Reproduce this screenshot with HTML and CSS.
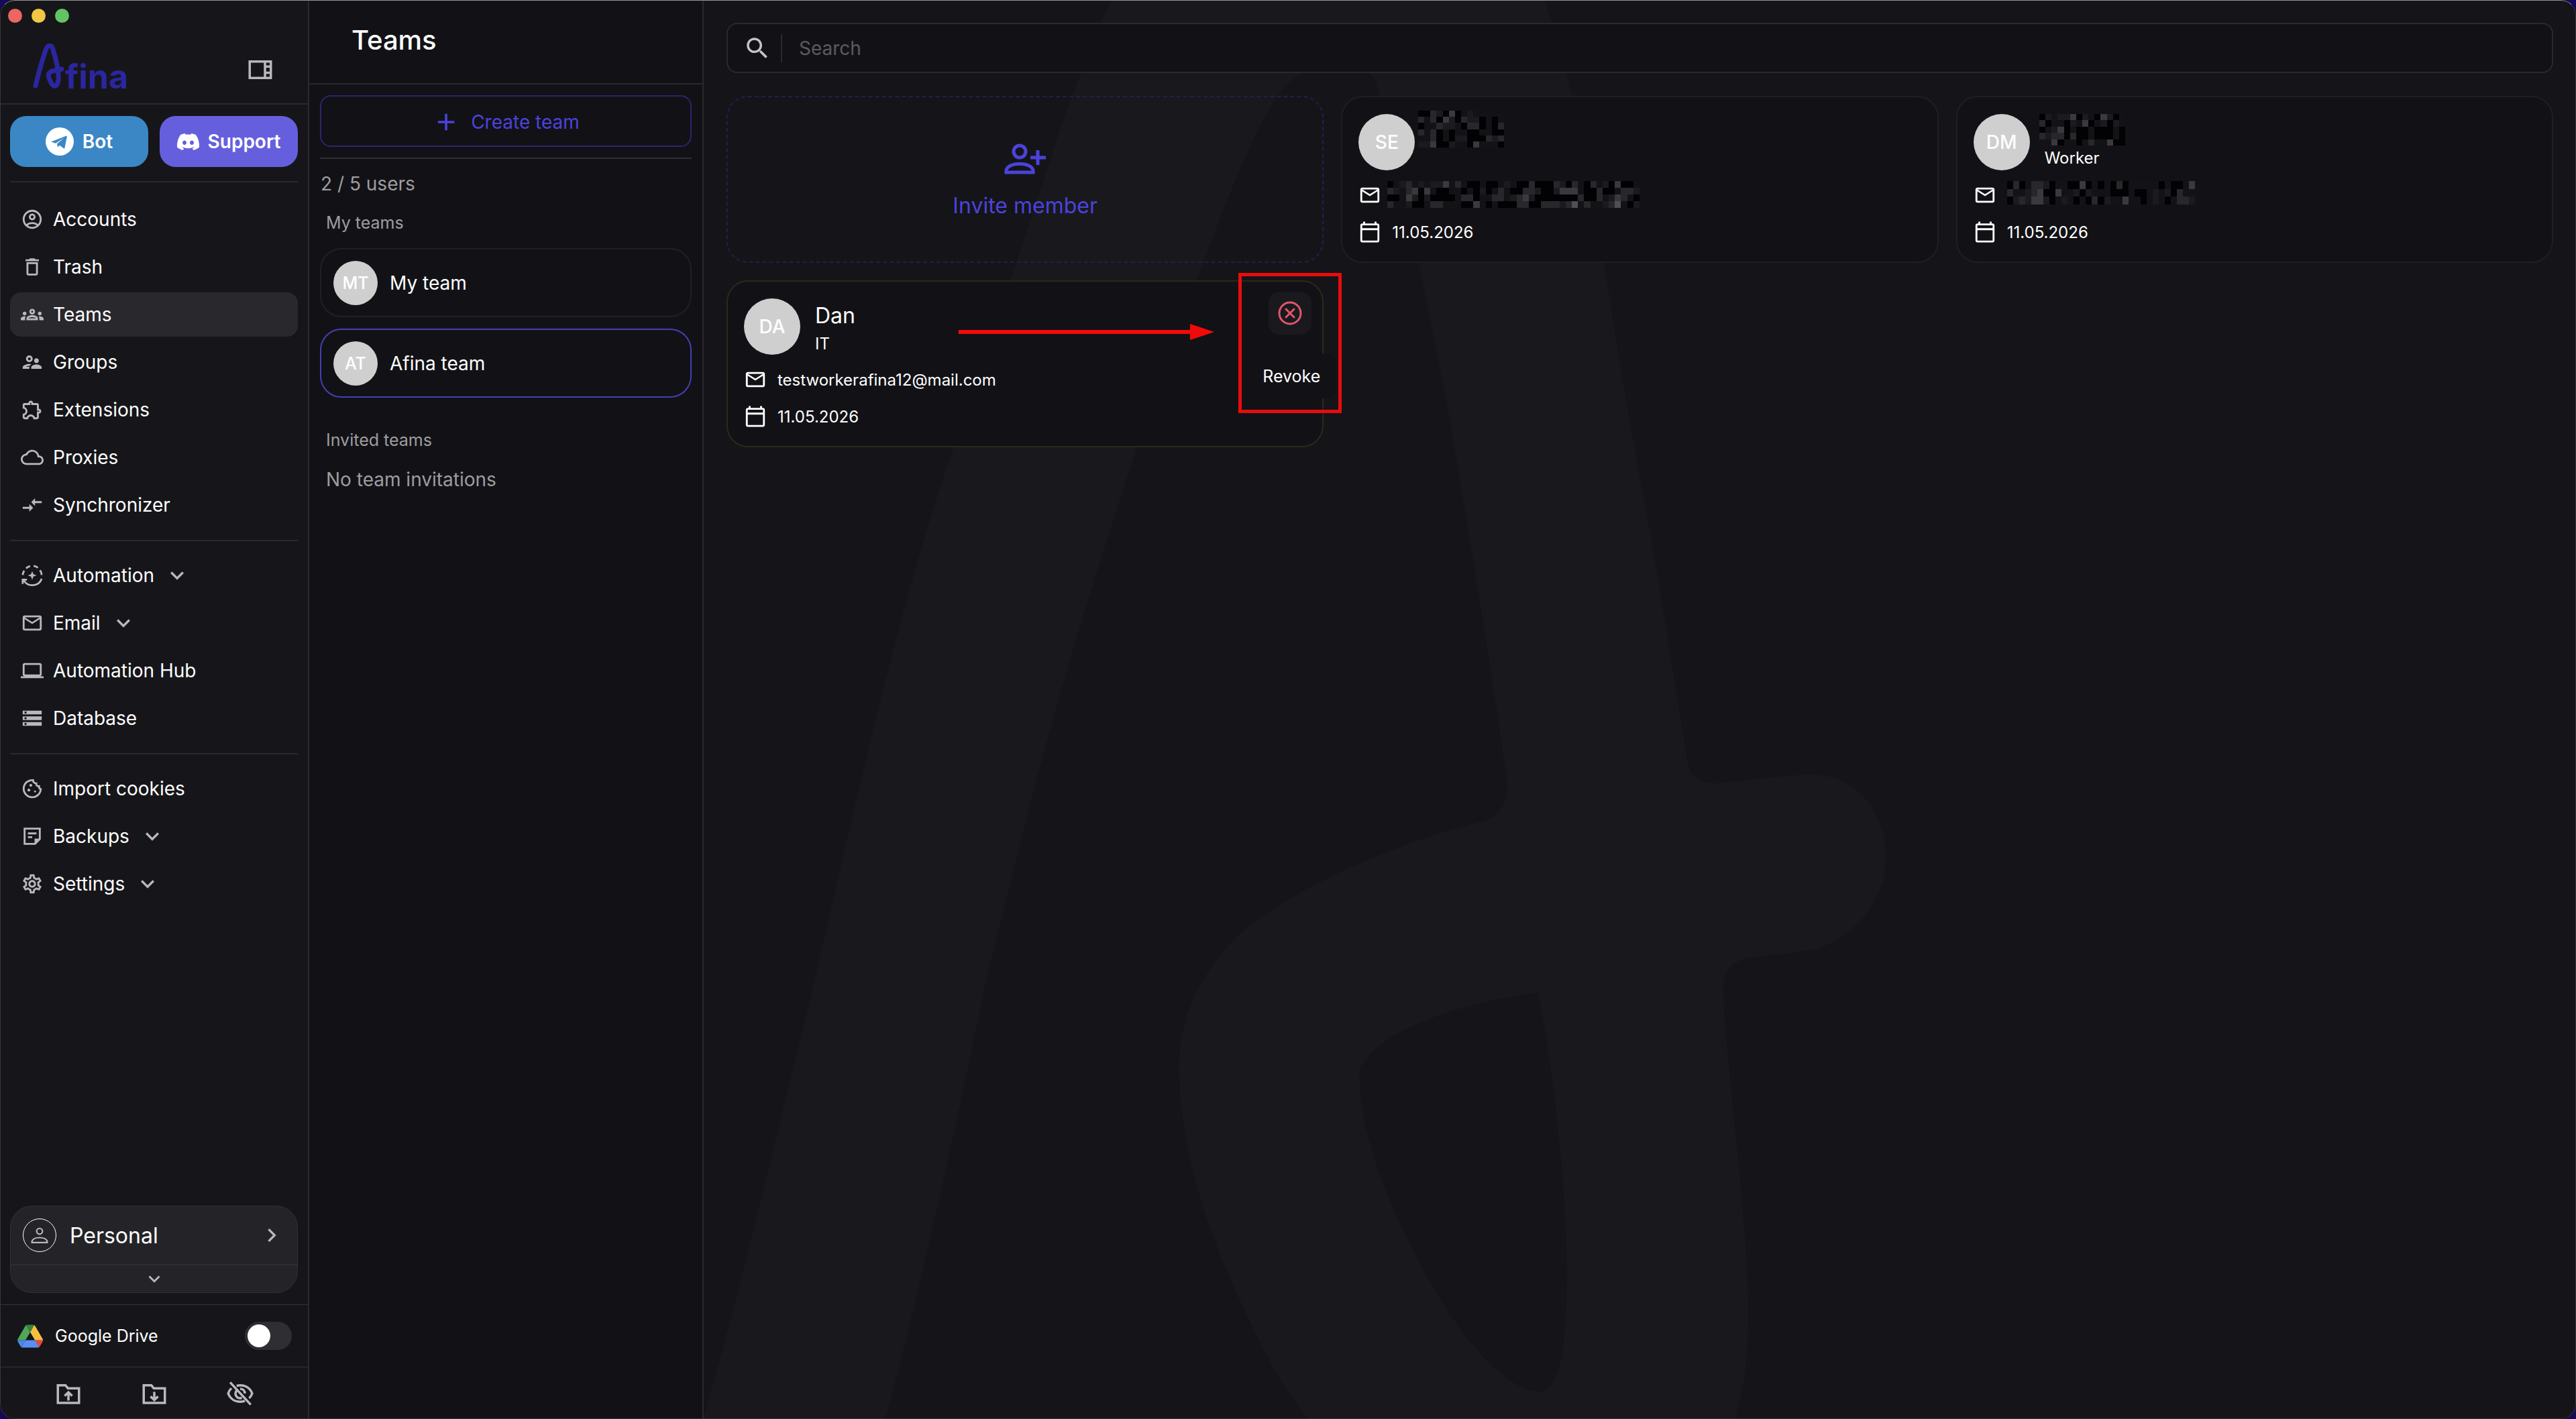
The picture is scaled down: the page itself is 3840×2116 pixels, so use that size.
FILE: index.html
```html
<!DOCTYPE html>
<html lang="en">
<head>
    <meta charset="utf-8">
    <title>Afina - Teams</title>
    <meta name="viewport" content="width=device-width, initial-scale=1.0">
    <link rel="stylesheet" href="styles.css">
</head>
<body>
<div class="window">

    <!-- sidebar -->
    <aside class="sidebar">
        <header class="sidebar-header">
            <div class="lights">
                <span class="light red"></span>
                <span class="light yellow"></span>
                <span class="light green"></span>
            </div>
            <div class="brand-row">
                <a href="#" class="brand">
                    <svg class="brand-mark" viewBox="49 70 46 67"><path d="M53 133C58 112 63 94 68 80C71 71 77 71 79 79C84 95 88 112 87 124C86 135 80 136 76 128C69 115 72 111 84 110L92 108"/></svg>
                    <span>fina</span>
                </a>
                <button class="icon-button" aria-label="Collapse sidebar">
                    <svg class="icon-lg" viewBox="0 0 24 24"><path d="M2 4v16h20V4H2zm2 2h11v12H4V6zm13 0h3v2.300h-3V6zm0 4.300h3v3.200h-3v-3.200zm0 5.200h3V18h-3v-2.500z" fill-rule="evenodd"/></svg>
                </button>
            </div>
        </header>

        <div class="social">
            <button class="social-button bot">
                <svg class="telegram" viewBox="0 0 42 42"><circle cx="21" cy="21" r="21"/><path class="plane" d="M8 21.500L31 12.500C31.500 12.300 32 12.600 31.900 13.300L28.500 30.500C28.300 31.600 27.700 31.700 27 31.200L21 26.800L18 29.500L17 24.500L27.500 15.500L15 23.800L8 21.500z"/></svg>
                Bot
            </button>
            <button class="social-button support">
                <svg class="discord" viewBox="0 0 24 24"><path d="M20.317 4.370a19.791 19.791 0 00-4.885-1.515c-.3.400-.5.900-.687 1.286-1.845-.276-3.680-.276-5.487 0-.2-.450-.4-.9-.696-1.286a19.736 19.736 0 00-4.918 1.542C.533 9.046-.319 13.580.099 18.058c2.084 1.564 4.073 2.479 6.024 3.086.53-.69.961-1.360 1.310-2.022-.694-.280-1.316-.660-1.914-1.126l.450-.3c3.928 1.793 8.180 1.793 12.061 0l.450.3c-.6.450-1.220.83-1.914 1.126.360.700.790 1.360 1.309 2.022 1.961-.607 3.950-1.522 6.034-3.086.500-5.177-.838-9.674-3.592-13.688zM8.020 15.331c-1.183 0-2.157-1.086-2.157-2.419s.956-2.419 2.157-2.419c1.211 0 2.176 1.095 2.157 2.419 0 1.333-.956 2.419-2.157 2.419zm7.975 0c-1.183 0-2.157-1.086-2.157-2.419s.955-2.419 2.157-2.419c1.211 0 2.176 1.095 2.157 2.419 0 1.333-.946 2.419-2.157 2.419z"/></svg>
                Support
            </button>
        </div>

        <nav class="nav">
            <ul class="nav-group">
                <li><a href="#" class="nav-item"><svg class="icon" viewBox="0 0 24 24"><path d="M12 2C6.480 2 2 6.480 2 12s4.480 10 10 10 10-4.480 10-10S17.520 2 12 2zM7.350 18.500C8.660 17.560 10.260 17 12 17s3.340.56 4.650 1.500C15.340 19.440 13.740 20 12 20s-3.340-.56-4.650-1.500zm10.790-1.380C16.450 15.800 14.320 15 12 15s-4.450.8-6.140 2.120C4.700 15.730 4 13.950 4 12c0-4.420 3.580-8 8-8s8 3.580 8 8c0 1.950-.7 3.730-1.860 5.120z"/><path d="M12 6c-1.930 0-3.500 1.570-3.500 3.500S10.070 13 12 13s3.500-1.570 3.500-3.500S13.930 6 12 6zm0 5c-.83 0-1.500-.67-1.500-1.500S11.170 8 12 8s1.500.67 1.500 1.500S12.830 11 12 11z"/></svg>Accounts</a></li>
                <li><a href="#" class="nav-item"><svg class="icon" viewBox="0 0 24 24"><path d="M6 19c0 1.100.9 2 2 2h8c1.100 0 2-.9 2-2V7H6v12zM8 9h8v10H8V9zm7.500-5l-1-1h-5l-1 1H5v2h14V4z"/></svg>Trash</a></li>
                <li><a href="#" class="nav-item active"><svg class="icon" viewBox="0 0 24 24"><path d="M4 13c1.100 0 2-.9 2-2s-.9-2-2-2-2 .9-2 2 .9 2 2 2zm1.130 1.100c-.37-.06-.74-.1-1.130-.1-.99 0-1.930.21-2.780.58C.48 14.900 0 15.620 0 16.430V18h4.500v-1.610c0-.83.23-1.610.63-2.290zM20 13c1.100 0 2-.9 2-2s-.9-2-2-2-2 .9-2 2 .9 2 2 2zm4 3.430c0-.81-.48-1.530-1.220-1.850-.85-.37-1.790-.58-2.780-.58-.39 0-.76.04-1.130.1.400.68.63 1.460.63 2.290V18H24v-1.570zM16.240 13.650c-1.170-.52-2.610-.9-4.240-.9-1.630 0-3.070.39-4.240.9C6.680 14.130 6 15.210 6 16.390V18h12v-1.610c0-1.180-.68-2.260-1.760-2.740zM8.070 16c.09-.23.13-.39.91-.69.97-.38 1.990-.56 3.020-.56s2.050.18 3.020.56c.77.3.81.46.91.69H8.070zM12 8c.55 0 1 .45 1 1s-.45 1-1 1-1-.45-1-1 .45-1 1-1m0-2c-1.660 0-3 1.340-3 3s1.340 3 3 3 3-1.340 3-3-1.340-3-3-3z"/></svg>Teams</a></li>
                <li><a href="#" class="nav-item"><svg class="icon" viewBox="0 0 24 24"><path d="M9 12c1.930 0 3.500-1.570 3.500-3.500S10.930 5 9 5 5.500 6.570 5.500 8.500 7.070 12 9 12zm0-5c.83 0 1.500.67 1.500 1.500S9.830 10 9 10s-1.500-.67-1.500-1.500S8.170 7 9 7zm.05 10H4.770c.99-.5 2.700-1 4.230-1 .11 0 .23.01.34.01.34-.73.93-1.330 1.640-1.810-.73-.13-1.420-.2-1.980-.2-2.340 0-7 1.170-7 3.500V19h7v-1.500c0-.17.02-.34.05-.5zm7.450-2.500c-1.840 0-5.500 1.010-5.500 3V19h11v-1.500c0-1.990-3.660-3-5.500-3zm1.210-1.820c.76-.43 1.290-1.240 1.290-2.180C19 9.120 17.880 8 16.500 8S14 9.120 14 10.500c0 .94.53 1.750 1.290 2.180.36.2.77.32 1.210.32s.85-.12 1.210-.32z"/></svg>Groups</a></li>
                <li><a href="#" class="nav-item"><svg class="icon" viewBox="0 0 24 24"><path d="M10.500 4.500c.28 0 .5.22.5.5v2h6v6h2c.28 0 .5.22.5.5s-.22.5-.5.5h-2v6h-2.120c-.68-1.750-2.390-3-4.380-3s-3.700 1.250-4.380 3H4v-2.120c1.750-.68 3-2.390 3-4.380 0-1.990-1.240-3.700-2.990-4.380L4 7h6V5c0-.28.22-.5.5-.5m0-2C9.120 2.500 8 3.620 8 5H4c-1.100 0-1.990.9-1.990 2v3.800h.29c1.490 0 2.700 1.210 2.700 2.700s-1.210 2.700-2.700 2.700H2V20c0 1.100.9 2 2 2h3.800v-.3c0-1.490 1.210-2.700 2.700-2.700s2.700 1.210 2.700 2.700v.3H17c1.100 0 2-.9 2-2v-4c1.380 0 2.500-1.120 2.500-2.500S20.380 11 19 11V7c0-1.100-.9-2-2-2h-4c0-1.380-1.120-2.500-2.500-2.500z"/></svg>Extensions</a></li>
                <li><a href="#" class="nav-item"><svg class="icon" viewBox="0 0 24 24"><path d="M19.350 10.040C18.670 6.590 15.640 4 12 4 9.110 4 6.600 5.640 5.350 8.040 2.340 8.360 0 10.910 0 14c0 3.310 2.690 6 6 6h13c2.760 0 5-2.240 5-5 0-2.640-2.050-4.780-4.650-4.960zM19 18H6c-2.210 0-4-1.790-4-4 0-2.050 1.530-3.760 3.560-3.970l1.070-.11.5-.95C8.080 7.140 9.940 6 12 6c2.620 0 4.880 1.860 5.390 4.430l.3 1.500 1.530.11c1.560.1 2.780 1.410 2.780 2.960 0 1.650-1.350 3-3 3z"/></svg>Proxies</a></li>
                <li><a href="#" class="nav-item"><svg class="icon" viewBox="0 0 24 24"><path d="M9.010 14H2v2h7.010v3L13 15l-3.990-4v3zm5.980-1v-3H22V8h-7.010V5L11 9l3.990 4z"/></svg>Synchronizer</a></li>
            </ul>
            <ul class="nav-group">
                <li><a href="#" class="nav-item"><svg class="icon line" viewBox="0 0 24 24"><path d="M2 11.500A10 10 0 0 1 3.600 7M5.500 4.600A10 10 0 0 1 9.800 2.200M13.500 2A10 10 0 0 1 18 3.900M20.200 6.500A10 10 0 0 1 22 11.500M22 15.500A10.500 10.500 0 0 1 3 17M2 21V16.500H6.500"/><path class="solid" d="M12 7.500L13.300 10.700L16.500 12L13.300 13.300L12 16.500L10.700 13.300L7.500 12L10.700 10.700z"/></svg>Automation<svg class="chevron" viewBox="0 0 24 24"><path d="M7.410 8.590L12 13.170l4.590-4.580L18 10l-6 6-6-6z"/></svg></a></li>
                <li><a href="#" class="nav-item"><svg class="icon" viewBox="0 0 24 24"><path d="M22 6c0-1.100-.9-2-2-2H4c-1.100 0-2 .9-2 2v12c0 1.100.9 2 2 2h16c1.100 0 2-.9 2-2V6zm-2 0l-8 5-8-5h16zm0 12H4V8l8 5 8-5v10z"/></svg>Email<svg class="chevron" viewBox="0 0 24 24"><path d="M7.410 8.590L12 13.170l4.590-4.580L18 10l-6 6-6-6z"/></svg></a></li>
                <li><a href="#" class="nav-item"><svg class="icon" viewBox="0 0 24 24"><path d="M20 18c1.100 0 1.990-.9 1.990-2L22 6c0-1.100-.9-2-2-2H4c-1.100 0-2 .9-2 2v10c0 1.100.9 2 2 2H0v2h24v-2h-4zM4 6h16v10H4V6z"/></svg>Automation Hub</a></li>
                <li><a href="#" class="nav-item"><svg class="icon" viewBox="0 0 24 24"><path d="M2 20h20v-4H2v4zm2-3h2v2H4v-2zM2 4v4h20V4H2zm4 3H4V5h2v2zm-4 7h20v-4H2v4zm2-3h2v2H4v-2z"/></svg>Database</a></li>
            </ul>
            <ul class="nav-group">
                <li><a href="#" class="nav-item"><svg class="icon line" viewBox="0 0 24 24"><path d="M13 3.100A9 9 0 1 0 21 12.500C19.500 12.200 19 11 19.200 9.500C17.500 9.800 16 8.500 16.300 6.500C14.300 6.500 12.800 5 13 3.100z"/><circle class="solid" cx="10.500" cy="8.500" r="1.500"/><circle class="solid" cx="8.500" cy="13.500" r="1.500"/><circle class="solid" cx="15" cy="15" r="1"/></svg>Import cookies</a></li>
                <li><a href="#" class="nav-item"><svg class="icon line" viewBox="0 0 24 24"><path d="M4 4H20V15L15 20H4zM7.500 9H16.500M7.500 13H12"/><path class="solid" d="M14.500 14.500H20L14.500 20z"/></svg>Backups<svg class="chevron" viewBox="0 0 24 24"><path d="M7.410 8.590L12 13.170l4.590-4.580L18 10l-6 6-6-6z"/></svg></a></li>
                <li><a href="#" class="nav-item"><svg class="icon" viewBox="0 0 24 24"><path d="M19.430 12.980c.04-.32.07-.64.07-.98 0-.34-.03-.66-.07-.98l2.110-1.650c.19-.15.24-.42.12-.64l-2-3.460c-.09-.16-.26-.25-.44-.25-.06 0-.12.01-.17.03l-2.490 1c-.52-.4-1.080-.73-1.690-.98l-.38-2.650C14.460 2.180 14.250 2 14 2h-4c-.25 0-.46.18-.49.42l-.38 2.650c-.61.25-1.170.59-1.690.98l-2.490-1c-.06-.02-.12-.03-.18-.03-.17 0-.34.09-.43.25l-2 3.460c-.13.22-.07.49.12.64l2.110 1.650c-.04.32-.07.65-.07.98 0 .33.03.66.07.98l-2.110 1.650c-.19.15-.24.42-.12.64l2 3.460c.09.16.26.25.44.25.06 0 .12-.01.17-.03l2.490-1c.52.4 1.080.73 1.690.98l.38 2.650c.03.24.24.42.49.42h4c.25 0 .46-.18.49-.42l.38-2.650c.61-.25 1.170-.59 1.690-.98l2.490 1c.06.02.12.03.18.03.17 0 .34-.09.43-.25l2-3.460c.12-.22.07-.49-.12-.64l-2.110-1.650zm-1.980-1.710c.04.31.05.52.05.73 0 .21-.02.43-.05.73l-.14 1.130.89.7 1.080.84-.7 1.210-1.270-.51-1.040-.42-.9.68c-.43.32-.84.56-1.250.73l-1.060.43-.16 1.130-.2 1.350h-1.400l-.19-1.350-.16-1.130-1.060-.43c-.43-.18-.83-.41-1.230-.71l-.91-.7-1.060.43-1.270.51-.7-1.210 1.080-.84.89-.7-.14-1.130c-.03-.31-.05-.54-.05-.74s.02-.43.05-.73l.14-1.130-.89-.7-1.080-.84.7-1.210 1.270.51 1.040.42.9-.68c.43-.32.84-.56 1.250-.73l1.060-.43.16-1.130.2-1.350h1.390l.19 1.350.16 1.130 1.060.43c.43.18.83.41 1.230.71l.91.7 1.060-.43 1.270-.51.7 1.210-1.070.85-.89.7.14 1.130zM12 8c-2.210 0-4 1.790-4 4s1.790 4 4 4 4-1.790 4-4-1.790-4-4-4zm0 6c-1.100 0-2-.9-2-2s.9-2 2-2 2 .9 2 2-.9 2-2 2z"/></svg>Settings<svg class="chevron" viewBox="0 0 24 24"><path d="M7.410 8.590L12 13.170l4.590-4.580L18 10l-6 6-6-6z"/></svg></a></li>
            </ul>
        </nav>

        <footer class="sidebar-footer">
            <div class="workspace">
                <button class="workspace-main">
                    <span class="workspace-avatar"><svg class="icon line" viewBox="0 0 24 24"><circle cx="12" cy="6.500" r="4"/><path d="M1.500 22V20.500C3 13.500 21 13.500 22.500 20.500V22z"/></svg></span>
                    <span class="workspace-name">Personal</span>
                    <svg class="chevron" viewBox="0 0 24 24"><path d="M8.590 16.590L13.170 12 8.590 7.410 10 6l6 6-6 6z"/></svg>
                </button>
                <button class="workspace-more" aria-label="Show more"><svg class="icon" viewBox="0 0 24 24"><path d="M7.410 8.590L12 13.170l4.590-4.580L18 10l-6 6-6-6z"/></svg></button>
            </div>
            <div class="drive">
                <svg class="drive-logo" viewBox="0 0 87 78"><path fill="#4c86f0" d="M6.600 66.850l3.850 6.650c.8 1.400 1.950 2.500 3.300 3.300L27.500 53H0c0 1.550.4 3.100 1.200 4.500z"/><path fill="#4fa657" d="M43.650 25L29.900 1.200c-1.350.8-2.500 1.900-3.300 3.300L1.200 48.500A9 9 0 0 0 0 53h27.500z"/><path fill="#e6483d" d="M73.550 76.800c1.350-.8 2.500-1.900 3.300-3.300l1.600-2.750 7.650-13.250c.8-1.400 1.200-2.950 1.200-4.500H59.800l5.850 11.500z"/><path fill="#38843f" d="M43.650 25L57.400 1.200C56.050.4 54.500 0 52.900 0H34.400c-1.600 0-3.150.45-4.500 1.200z"/><path fill="#5b8ef5" d="M59.800 53H27.500L13.750 76.800c1.350.8 2.900 1.200 4.500 1.200h50.800c1.600 0 3.150-.45 4.500-1.200z"/><path fill="#f6bf42" d="M73.400 26.500L60.700 4.500c-.8-1.400-1.950-2.500-3.300-3.300L43.650 25 59.800 53h27.450c0-1.550-.4-3.100-1.200-4.500z"/></svg>
                <label for="driveToggle">Google Drive</label>
                <input type="checkbox" id="driveToggle" class="toggle">
            </div>
            <div class="tools">
                <button class="icon-button" aria-label="Export"><svg class="icon-lg line" viewBox="0 0 24 24"><path d="M3 5H9.500L11.500 7.500H21V20H3zM12 18V11.500M8.800 14L12 11L15.200 14"/></svg></button>
                <button class="icon-button" aria-label="Import"><svg class="icon-lg line" viewBox="0 0 24 24"><path d="M3 5H9.500L11.500 7.500H21V20H3zM12 10.500V17M8.800 14.500L12 17.500L15.200 14.500"/></svg></button>
                <button class="icon-button" aria-label="Hide"><svg class="icon-lg line" viewBox="0 0 24 24"><path d="M4.500 7.500C3.200 8.800 2.300 10.300 1.800 12C3.500 16.500 7.500 19 12 19C13.500 19 14.800 18.700 16 18.200M9 5.400C15 3.800 20.500 6.800 22.200 12C21.700 13.500 20.800 14.800 19.700 16M9 9.500C6.500 13 9.500 17 13.500 15.700M12 8C14.500 8 16 9.800 16 12M3.500 2.500L21 21.500"/></svg></button>
            </div>
        </footer>
    </aside>

    <!-- team list -->
    <section class="teams">
        <header class="teams-header"><h1>Teams</h1></header>
        <div class="teams-body">
            <button class="create-button">
                <svg class="plus" viewBox="0 0 24 24"><path d="M19 13h-6v6h-2v-6H5v-2h6V5h2v6h6v2z"/></svg>
                Create team
            </button>
            <p class="users-count">2 / 5 users</p>
            <h2>My teams</h2>
            <button class="team"><span class="avatar avatar-sm">MT</span>My team</button>
            <button class="team selected"><span class="avatar avatar-sm">AT</span>Afina team</button>
            <h2 class="invited">Invited teams</h2>
            <p class="no-invites">No team invitations</p>
        </div>
    </section>

    <!-- members -->
    <main class="main">
        <svg class="watermark" viewBox="0 0 2790 2116" preserveAspectRatio="xMinYMin slice">
            <g transform="translate(-10 0) scale(1.786 1.350)">
                <path fill-rule="evenodd" d="M345 0C330 50 312 105 300 155C270 280 235 410 205 530C165 690 130 900 95 1100C65 1260 35 1430 5 1568H157C185 1430 212 1270 240 1090C260 980 278 885 300 780C330 640 365 500 400 370C425 285 450 180 482 110C505 65 545 60 564 84C585 150 600 280 625 440C640 560 660 710 676 865C677 885 670 903 655 907C600 925 520 965 465 1018C430 1055 402 1110 402 1180C404 1280 430 1375 460 1455C475 1500 495 1545 511 1568H865C880 1520 878 1430 874 1360C869 1270 860 1180 856 1095C855 1070 865 1060 880 1057C905 1053 925 1052 940 1045C975 1025 992 985 992 945C992 900 970 856 930 855C905 856 875 862 852 865C838 866 829 858 827 845C815 750 805 660 794 580C780 480 765 370 755 270C745 180 725 70 707 0ZM702 1096C640 1107 570 1135 553 1180C550 1260 590 1370 625 1445C650 1495 680 1537 704 1537C722 1535 726 1470 726 1400C724 1290 715 1190 702 1096Z"/>
            </g>
        </svg>

        <form class="search">
            <svg class="icon-lg" viewBox="0 0 24 24"><path d="M15.500 14h-.79l-.28-.27C15.410 12.590 16 11.110 16 9.500 16 5.910 13.090 3 9.500 3S3 5.910 3 9.500 5.910 16 9.500 16c1.610 0 3.090-.59 4.230-1.570l.27.28v.79l5 4.990L20.490 19l-4.990-5zm-6 0C7.010 14 5 11.990 5 9.500S7.010 5 9.500 5 14 7.010 14 9.500 11.990 14 9.500 14z"/></svg>
            <input type="search" placeholder="Search" aria-label="Search">
        </form>

        <div class="cards">
            <button class="card invite">
                <svg class="invite-icon" viewBox="0 0 62 46"><circle cx="23" cy="12" r="9"/><path d="M3 43V40C5 27 41 27 43 40V43zM39 21H62M50 10V32"/></svg>
                Invite member
            </button>

            <article class="card">
                <div class="member">
                    <span class="avatar">SE</span>
                    <div class="member-text">
                        <span class="name"><svg class="hidden-name tight" data-rows="00320401211111 31304203220101 01132210330103 31301011001100 11301022000323 22400211041110"></svg></span>
                    </div>
                </div>
                <div class="info">
                    <svg class="icon" viewBox="0 0 24 24"><path d="M22 6c0-1.100-.9-2-2-2H4c-1.100 0-2 .9-2 2v12c0 1.100.9 2 2 2h16c1.100 0 2-.9 2-2V6zm-2 0l-8 5-8-5h16zm0 12H4V8l8 5 8-5v10z"/></svg>
                    <svg class="hidden-mail long" data-rows="01231212241310010012100300032031031204001 32134041001101020131003320024441003001332 00142020000133011331234200000003003124310 31120013311100410100033003332351311235102"></svg>
                </div>
                <div class="info"><svg class="icon" viewBox="0 0 24 24"><path d="M20 3h-1V1h-2v2H7V1H5v2H4c-1.100 0-2 .9-2 2v16c0 1.100.9 2 2 2h16c1.100 0 2-.9 2-2V5c0-1.100-.9-2-2-2zm0 18H4V10h16v11zm0-13H4V5h16v3z"/></svg>11.05.2026</div>
            </article>

            <article class="card">
                <div class="member">
                    <span class="avatar">DM</span>
                    <div class="member-text">
                        <span class="name"><svg class="hidden-name" data-rows="02122402104201 30110214012021 01240100100010 32330300100010 11401101311400"></svg></span>
                        <span class="role">Worker</span>
                    </div>
                </div>
                <div class="info">
                    <svg class="icon" viewBox="0 0 24 24"><path d="M22 6c0-1.100-.9-2-2-2H4c-1.100 0-2 .9-2 2v12c0 1.100.9 2 2 2h16c1.100 0 2-.9 2-2V6zm-2 0l-8 5-8-5h16zm0 12H4V8l8 5 8-5v10z"/></svg>
                    <svg class="hidden-mail" data-rows="0301332011004010103011111010014 3112340041120211100010012120311 0232442012101030211411012101332"></svg>
                </div>
                <div class="info"><svg class="icon" viewBox="0 0 24 24"><path d="M20 3h-1V1h-2v2H7V1H5v2H4c-1.100 0-2 .9-2 2v16c0 1.100.9 2 2 2h16c1.100 0 2-.9 2-2V5c0-1.100-.9-2-2-2zm0 18H4V10h16v11zm0-13H4V5h16v3z"/></svg>11.05.2026</div>
            </article>

            <article class="card pending">
                <div class="member">
                    <span class="avatar">DA</span>
                    <div class="member-text">
                        <span class="name">Dan</span>
                        <span class="role">IT</span>
                    </div>
                </div>
                <div class="info"><svg class="icon" viewBox="0 0 24 24"><path d="M22 6c0-1.100-.9-2-2-2H4c-1.100 0-2 .9-2 2v12c0 1.100.9 2 2 2h16c1.100 0 2-.9 2-2V6zm-2 0l-8 5-8-5h16zm0 12H4V8l8 5 8-5v10z"/></svg>testworkerafina12@mail.com</div>
                <div class="info"><svg class="icon" viewBox="0 0 24 24"><path d="M20 3h-1V1h-2v2H7V1H5v2H4c-1.100 0-2 .9-2 2v16c0 1.100.9 2 2 2h16c1.100 0 2-.9 2-2V5c0-1.100-.9-2-2-2zm0 18H4V10h16v11zm0-13H4V5h16v3z"/></svg>11.05.2026</div>
                <button class="revoke" aria-labelledby="revokeTip"><svg viewBox="0 0 36 36"><circle cx="18" cy="18" r="16"/><path d="M12 12L24 24M24 12L12 24"/></svg></button>
                <span class="tooltip" id="revokeTip" role="tooltip">Revoke</span>
                <svg class="arrow" viewBox="0 0 381 24"><path d="M0 9H345V0L381 12L345 24V15H0z"/></svg>
                <span class="highlight"></span>
            </article>
        </div>
    </main>
</div>
<script src="script.js"></script>
</body>
</html>
```
FILE: styles.css
```css
* {
    box-sizing: border-box;
}
html, body {
    height: 100%;
    margin: 0;
}
body {
    background-color: #16085a;
    color: #fff;
    font-family: Inter, "Liberation Sans", sans-serif;
    font-size: 28px;
}
button, input {
    font: inherit;
    color: inherit;
}
button {
    padding: 0;
    border: none;
    background: none;
    cursor: pointer;
}
a {
    color: inherit;
    text-decoration: none;
}
h1, h2, p, ul {
    margin: 0;
    padding: 0;
}
ul {
    list-style: none;
}
svg {
    display: block;
    flex-shrink: 0;
    fill: currentColor;
}
.icon {
    width: 34px;
    height: 34px;
}
.icon-lg {
    width: 42px;
    height: 42px;
}
.chevron {
    width: 40px;
    height: 40px;
}
.line {
    fill: none;
    stroke: currentColor;
    stroke-width: 2;
}
.line .solid {
    fill: currentColor;
    stroke: none;
}

.window {
    position: relative;
    display: flex;
    min-height: 100%;
    background-color: #151519;
    border-radius: 22px;
    overflow: hidden;
}
/* thin window outline */
.window::after {
    content: "";
    position: absolute;
    inset: 0;
    border: 1px solid #36363b;
    border-top-color: #96969a;
    border-radius: 22px;
    pointer-events: none;
}

/* sidebar */
.sidebar {
    display: flex;
    flex-direction: column;
    width: 461px;
    flex-shrink: 0;
    background-color: #16161a;
    border-right: 2px solid #29292e;
}
.sidebar-header {
    padding-top: 13px;
    border-bottom: 2px solid #29292e;
}
.lights {
    display: flex;
    gap: 14px;
    padding-left: 12px;
}
.light {
    width: 21px;
    height: 21px;
    border-radius: 50%;
}
.red {
    background-color: #ee6661;
}
.yellow {
    background-color: #f3c744;
}
.green {
    background-color: #62c462;
}
.brand-row {
    display: flex;
    align-items: center;
    justify-content: space-between;
    height: 120px;
    padding: 26px 50px 6px 49px;
}
.brand {
    display: flex;
    align-items: baseline;
    gap: 2px;
    color: #2b26a0;
    font-size: 50px;
    font-weight: 700;
    line-height: 60px;
}
.brand-mark {
    width: 46px;
    height: 67px;
    margin-bottom: -6px;
    fill: none;
    stroke: currentColor;
    stroke-width: 7;
    stroke-linecap: round;
}
.icon-button {
    color: #b9b9bd;
}
.social {
    display: flex;
    gap: 17px;
    margin: 17px 15px 0;
    padding-bottom: 21px;
    border-bottom: 2px solid #29292e;
}
.social-button {
    display: flex;
    flex: 1;
    align-items: center;
    justify-content: center;
    gap: 13px;
    height: 76px;
    border-radius: 24px;
    font-weight: 600;
}
.bot {
    background-color: #3b87c5;
}
.support {
    background-color: #665fdd;
}
.telegram {
    width: 42px;
    height: 42px;
}
.plane {
    fill: #3b87c5;
}
.discord {
    width: 33px;
    height: 33px;
}

.nav {
    padding: 22px 15px 0;
}
.nav-group {
    display: flex;
    flex-direction: column;
    gap: 5px;
}
.nav-group + .nav-group {
    margin-top: 19px;
    padding-top: 18px;
    border-top: 2px solid #29292e;
}
.nav-item {
    display: flex;
    align-items: center;
    gap: 14px;
    height: 66px;
    padding: 0 16px;
    border-radius: 16px;
}
.nav-item svg {
    color: #b9b9bd;
}
.active {
    background-color: #28282d;
}

.sidebar-footer {
    margin-top: auto;
}
.workspace {
    margin: 0 15px 17px;
    background-color: #242428;
    border: 1px solid #303035;
    border-radius: 32px;
}
.workspace-main {
    display: flex;
    align-items: center;
    width: 100%;
    height: 86px;
    padding: 0 18px;
}
.workspace-avatar {
    display: flex;
    align-items: center;
    justify-content: center;
    width: 50px;
    height: 50px;
    border: 1px solid #fff;
    border-radius: 50%;
}
.workspace-avatar .icon {
    width: 26px;
    height: 26px;
}
.workspace-name {
    flex: 1;
    margin-left: 20px;
    font-size: 32px;
    text-align: left;
}
.workspace .icon, .workspace .chevron {
    color: #b9b9bd;
}
.workspace-more {
    display: flex;
    align-items: center;
    justify-content: center;
    width: 100%;
    height: 42px;
    border-top: 2px solid #2e2e33;
}
.drive {
    display: flex;
    align-items: center;
    height: 94px;
    padding: 0 24px 0 26px;
    border-top: 1px solid #333338;
    border-bottom: 1px solid #333338;
    font-size: 25px;
}
.drive-logo {
    width: 38px;
    height: 35px;
}
.drive label {
    flex: 1;
    margin-left: 18px;
}
.toggle {
    appearance: none;
    width: 70px;
    height: 42px;
    margin: 0;
    padding: 4px;
    border-radius: 21px;
    background-color: #2f2e33;
}
.toggle::before {
    content: "";
    display: block;
    width: 34px;
    height: 34px;
    border-radius: 50%;
    background-color: #fff;
}
.toggle:checked::before {
    margin-left: auto;
}
.tools {
    display: flex;
    align-items: center;
    justify-content: center;
    gap: 86px;
    height: 77px;
}

/* team list */
.teams {
    width: 588px;
    flex-shrink: 0;
    background-color: #121216;
    border-right: 2px solid #29292e;
}
.teams-header {
    height: 126px;
    padding: 36px 63px 0;
    border-bottom: 2px solid #29292e;
}
h1 {
    font-size: 40px;
    font-weight: 500;
    line-height: 48px;
}
.teams-body {
    padding: 16px;
}
.create-button {
    display: flex;
    align-items: center;
    justify-content: center;
    gap: 16px;
    width: 100%;
    height: 77px;
    padding-top: 2px;
    border: 2px solid #29256f;
    border-radius: 16px;
    color: #4b43dc;
}
.plus {
    width: 42px;
    height: 42px;
}
.users-count {
    margin-top: 16px;
    padding: 20px 1px 0;
    border-top: 2px solid #303034;
    color: #9d9da0;
    line-height: 34px;
}
h2 {
    margin: 25px 9px 22px;
    color: #9d9da0;
    font-size: 25px;
    font-weight: 400;
    line-height: 32px;
}
.team {
    display: flex;
    align-items: center;
    gap: 18px;
    width: 100%;
    height: 103px;
    margin-bottom: 17px;
    padding: 0 18px;
    border: 2px solid #212125;
    border-radius: 32px;
}
.selected {
    border-color: #463fb5;
}
.invited {
    margin-top: 47px;
}
.no-invites {
    padding: 4px 9px;
    color: #9d9da0;
    line-height: 34px;
}
.avatar {
    display: flex;
    align-items: center;
    justify-content: center;
    flex-shrink: 0;
    width: 84px;
    height: 84px;
    border-radius: 50%;
    background-color: #cfcfcf;
    font-weight: 500;
}
.avatar-sm {
    width: 66px;
    height: 66px;
    font-size: 25px;
}

/* members */
.main {
    position: relative;
    flex: 1;
    padding: 34px;
}
.watermark {
    position: absolute;
    top: 0;
    left: 0;
    width: 100%;
    height: 100%;
    fill: #19191d;
}
.search {
    position: relative;
    display: flex;
    align-items: center;
    height: 75px;
    padding: 0 23px;
    background-color: #121216;
    border: 2px solid #29292e;
    border-radius: 16px;
    color: #c4c4c6;
}
.search input {
    flex: 1;
    height: 42px;
    margin-left: 14px;
    padding: 0 25px;
    border: none;
    border-left: 2px solid #29292e;
    background: none;
    outline: none;
}
.search input::placeholder {
    color: #5b5b5e;
}
.cards {
    position: relative;
    display: grid;
    grid-template-columns: repeat(3, 1fr);
    gap: 26px;
    margin-top: 34px;
}
.card {
    position: relative;
    display: flex;
    flex-direction: column;
    gap: 19px;
    height: 249px;
    padding: 25px 24px;
    background-color: #121216;
    border: 2px solid #1f1f23;
    border-radius: 32px;
}
.invite {
    align-items: center;
    justify-content: center;
    gap: 27px;
    padding-top: 30px;
    background: none;
    border: 2px dashed #211e50;
    color: #4b43dc;
    font-size: 32px;
}
.invite-icon {
    width: 62px;
    height: 46px;
    fill: none;
    stroke: currentColor;
    stroke-width: 5;
}
.pending {
    border-color: #2e281a;
}
.member {
    display: flex;
    gap: 22px;
    height: 84px;
}
.member-text {
    display: flex;
    flex-direction: column;
    gap: 4px;
    padding-top: 6px;
}
.name {
    position: relative;
    height: 40px;
    font-size: 32px;
    line-height: 40px;
}
.role {
    font-size: 24px;
    line-height: 36px;
}
.info {
    position: relative;
    display: flex;
    align-items: center;
    gap: 16px;
    height: 36px;
    font-size: 24px;
}
/* pixelated names and addresses */
.hidden-name {
    position: absolute;
    top: -6px;
    left: -8px;
    width: 128px;
    height: 47px;
}
.hidden-name.tight {
    top: -11px;
    left: -17px;
    height: 55px;
}
.hidden-mail {
    position: absolute;
    top: -3px;
    left: 50px;
    width: 280px;
    height: 35px;
}
.hidden-mail.long {
    left: 43px;
    width: 376px;
    height: 40px;
}
.revoke {
    position: absolute;
    top: 15px;
    right: 16px;
    display: flex;
    align-items: center;
    justify-content: center;
    width: 64px;
    height: 64px;
    border-radius: 16px;
    background-color: #1a1a1e;
}
.revoke svg {
    width: 36px;
    height: 36px;
    fill: none;
    stroke: #e0566b;
    stroke-width: 3;
    stroke-linecap: round;
}
.tooltip {
    position: absolute;
    top: 108px;
    right: -21px;
    padding: 0 24px;
    background-color: #121216;
    border-radius: 12px;
    font-size: 25px;
    line-height: 66px;
}
/* callout over the card */
.arrow {
    position: absolute;
    top: 63px;
    right: 161px;
    width: 381px;
    height: 24px;
    fill: #f20a0a;
}
.highlight {
    position: absolute;
    top: -13px;
    right: -29px;
    width: 154px;
    height: 209px;
    border: 5px solid #ea0c0c;
    pointer-events: none;
}
```
FILE: script.js
```js
// draws the pixelated blocks: one digit per cell, rows split by a space
const shades = ['#020204', '#131317', '#1b1b1f', '#28282c', '#3a3a3e', '#505054'];

document.querySelectorAll('svg[data-rows]').forEach(function(svg) {
    const rows = svg.dataset.rows.split(' ');
    svg.setAttribute('viewBox', `0 0 ${rows[0].length} ${rows.length}`);
    svg.setAttribute('preserveAspectRatio', 'none');
    svg.setAttribute('shape-rendering', 'crispEdges');
    rows.forEach(function(row, y) {
        row.split('').forEach(function(digit, x) {
            const cell = document.createElementNS('http://www.w3.org/2000/svg', 'rect');
            cell.setAttribute('x', x);
            cell.setAttribute('y', y);
            cell.setAttribute('width', 1);
            cell.setAttribute('height', 1);
            cell.setAttribute('fill', shades[digit]);
            svg.appendChild(cell);
        });
    });
});
```
